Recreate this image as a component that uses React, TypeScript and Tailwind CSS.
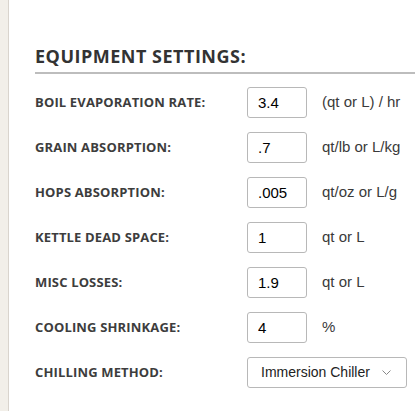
import React from 'react';

const rows = [
  { label: 'Boil Evaporation Rate:', value: '3.4', unit: '(qt or L) / hr' },
  { label: 'Grain Absorption:', value: '.7', unit: 'qt/lb or L/kg' },
  { label: 'Hops Absorption:', value: '.005', unit: 'qt/oz or L/g' },
  { label: 'Kettle Dead Space:', value: '1', unit: 'qt or L' },
  { label: 'Misc Losses:', value: '1.9', unit: 'qt or L' },
  { label: 'Cooling Shrinkage:', value: '4', unit: '%' },
];

const labelCls =
  "w-[212px] shrink-0 font-['Open_Sans',sans-serif] text-[13px] font-bold uppercase tracking-[0.15px] text-[#3d3d3d]";

export default function App() {
  return (
    <div className="flex h-[411px] w-full overflow-hidden bg-white">
      {/* sidebar edge */}
      <div className="w-[9px] shrink-0 border-r border-[#d9d4cd] bg-[#f2efe9]" />

      <div className="flex-1 pl-[26px] pt-[44px]">
        <h2 className="border-b-2 border-[#bdbdbd] pb-[4px] font-['Open_Sans',sans-serif] text-[18px] font-bold leading-[24px] tracking-[0.5px] text-[#333]">
          EQUIPMENT SETTINGS:
        </h2>

        <div className="mt-[13px] flex flex-col gap-[14px]">
          {rows.map((r) => (
            <div key={r.label} className="flex h-[31px] items-center">
              <span className={labelCls}>{r.label}</span>
              <input
                type="text"
                defaultValue={r.value}
                className="h-[31px] w-[60px] rounded-[3px] border border-[#b8b8b8] bg-white px-[10px] font-['Liberation_Sans',Arial,sans-serif] text-[15px] text-black outline-none"
              />
              <span className="ml-[15px] font-['Liberation_Sans',Arial,sans-serif] text-[15px] text-[#3a3a3a]">
                {r.unit}
              </span>
            </div>
          ))}

          <div className="flex h-[31px] items-center">
            <span className={labelCls}>Chilling Method:</span>
            <div className="flex h-[31px] w-[160px] items-center justify-between rounded-[3px] border border-[#b8b8b8] bg-white pl-[13px] pr-[15px]">
              <span className="font-['Liberation_Sans',Arial,sans-serif] text-[14px] text-[#222]">
                Immersion Chiller
              </span>
              <svg width="9" height="5" viewBox="0 0 9 5" fill="none">
                <path d="M0.5 0.5 L4.5 4.5 L8.5 0.5" stroke="#888" strokeWidth="1" />
              </svg>
            </div>
          </div>
        </div>
      </div>
    </div>
  );
}
